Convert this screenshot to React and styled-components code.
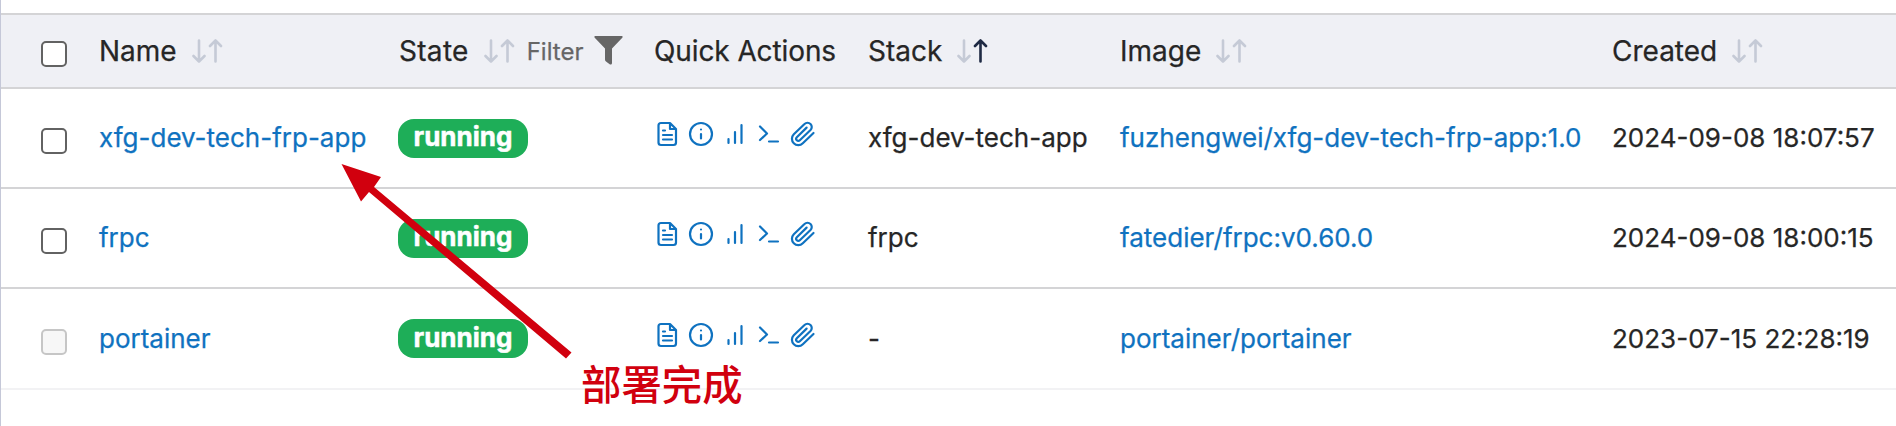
import React from "react";
import styled, { createGlobalStyle } from "styled-components";

const Global = createGlobalStyle`
  * { box-sizing: border-box; }
  body { margin: 0; background: #fff; font-family: Inter, "Noto Sans CJK SC", sans-serif; color: #262626; }
`;

const Page = styled.main`
  position: relative;
  width: 1896px;
  height: 426px;
  padding-top: 13px;
  border-left: 1px solid #c5c8d8;
  overflow: hidden;
`;

const Row = styled.div`
  display: grid;
  grid-template-columns: 98px 299px 256px 214px 252px 492px 1fr;
  height: ${(p) => (p.$last ? 101 : 100)}px;
  padding-top: ${(p) => (p.$last ? 1 : 0)}px;
  border-bottom: 2px solid ${(p) => (p.$last ? "#f2f2f4" : "#d4d4d6")};
`;

const HeaderRow = styled(Row)`
  height: 76px;
  background: #eff0f5;
  border-top: 2px solid #d4d4d6;
`;

const Cell = styled.div`
  display: flex;
  align-items: flex-start;
  white-space: nowrap;
  padding-top: 32px;
  font-size: 26px;
  line-height: 34px;
  -webkit-text-stroke: 0.25px currentColor;
`;

const HeadCell = styled(Cell)`
  padding-top: 19px;
  padding-left: ${(p) => p.$indent || 0}px;
  font-size: 28px;
  letter-spacing: ${(p) => p.$tracking || "normal"};
`;

const CheckCell = styled.div`
  padding: ${(p) => (p.$head ? 26 : 39)}px 0 0 40px;
`;

const Checkbox = styled.input`
  appearance: none;
  display: block;
  margin: 0;
  width: 26px;
  height: 26px;
  border: 2px solid #626262;
  border-radius: 5px;
  background: #fff;
  &:disabled { border-color: #c6c6c6; background: #f7f7f7; }
`;

const Link = styled.a`
  color: #0f72c0;
`;

const Badge = styled.span`
  display: block;
  margin-top: ${(p) => (p.$last ? -3 : -2)}px;
  padding-top: ${(p) => (p.$last ? 1 : 0)}px;
  width: 130px;
  height: 39px;
  line-height: 36px;
  border-radius: 16px;
  background: #1eae58;
  color: #fff;
  font-weight: 700;
  text-align: center;
  -webkit-text-stroke: 0.5px currentColor;
`;

const SortIcon = styled.svg`
  flex: none;
  width: 32px;
  height: 24px;
  margin: 5px 0 0 15px;
  fill: none;
  stroke: #c5cad6;
  stroke-width: 2.6;
  stroke-linecap: round;
  stroke-linejoin: round;
`;

const FilterLabel = styled.span`
  margin-left: 11px;
  font-size: 24px;
  color: #666;
  line-height: 36px;
  letter-spacing: 0;
`;

const Funnel = styled.svg`
  width: 29px;
  height: 29px;
  margin: 2px 0 0 10px;
  fill: #666;
`;

const Actions = styled.div`
  display: flex;
  padding-top: 30px;
`;

const ActionIcons = styled.svg`
  width: 166px;
  height: 32px;
  fill: none;
  stroke: #0f72c0;
  stroke-width: 2.2;
  stroke-linecap: round;
  stroke-linejoin: round;
`;

const Annotation = styled.svg`
  position: absolute;
  left: -1px;
  top: 0;
  pointer-events: none;
`;

const Note = styled.div`
  position: absolute;
  left: 580px;
  top: 355px;
  font: 500 40.4px/56px "Noto Sans CJK SC", sans-serif;
  color: #d1000e;
`;

const Sort = ({ up }) => (
  <SortIcon viewBox="0 0 32 24">
    <path d="M7 1.500v21M1.500 17l5.500 5.500 5.500-5.500" />
    <path d="M23.500 22.500v-21M18 7l5.500-5.500 5.500 5.500" stroke={up ? "#1f2a44" : undefined} />
  </SortIcon>
);

const QuickActions = () => (
  <Actions>
    <ActionIcons viewBox="654 119 166 32">
      <path d="M670 123h-9a2.500 2.500 0 0 0-2.500 2.500v17a2.500 2.500 0 0 0 2.500 2.500h12.500a2.500 2.500 0 0 0 2.500-2.500v-13.500zM670 123v6h6M663 130.500h2M663 135h9M663 139.500h9" />
      <circle cx="701" cy="134" r="11" />
      <path d="M701 129.500v.01M701 134v4.500" />
      <path d="M728.500 139v4M735 132v11M741.500 125v18" />
      <path d="M760 126.500l7 7-7 6.500M769 141.500h9" />
      <path d="M813.500 133l-10.700 10.200a6.300 6.300 0 0 1-9-9L804.500 124a4.200 4.200 0 0 1 6 6l-10.700 10.200a2.100 2.100 0 0 1-3-3l9.800-9.600" />
    </ActionIcons>
  </Actions>
);

const containers = [
  { name: "xfg-dev-tech-frp-app", stack: "xfg-dev-tech-app", image: "fuzhengwei/xfg-dev-tech-frp-app:1.0", created: "2024-09-08 18:07:57" },
  { name: "frpc", stack: "frpc", image: "fatedier/frpc:v0.60.0", created: "2024-09-08 18:00:15" },
  { name: "portainer", stack: "-", image: "portainer/portainer", created: "2023-07-15 22:28:19", locked: true },
];

export default function App() {
  return (
    <Page>
      <Global />
      <HeaderRow>
        <CheckCell $head><Checkbox type="checkbox" /></CheckCell>
        <HeadCell>Name<Sort /></HeadCell>
        <HeadCell $indent={1} $tracking="0.3px">State<Sort /><FilterLabel>Filter</FilterLabel>
          <Funnel viewBox="0 0 29 29"><path d="M1 0h27q1 0 .5 1.500L18 12.500v14.500q0 2-2 1.500l-4-3q-1-.5-1-2V12.500L.5 1.500Q0 0 1 0z" /></Funnel>
        </HeadCell>
        <HeadCell $tracking="-0.1px">Quick Actions</HeadCell>
        <HeadCell>Stack<Sort up /></HeadCell>
        <HeadCell>Image<Sort /></HeadCell>
        <HeadCell>Created<Sort /></HeadCell>
      </HeaderRow>
      {containers.map((c) => (
        <Row key={c.name} $last={c.locked}>
          <CheckCell><Checkbox type="checkbox" disabled={c.locked} /></CheckCell>
          <Cell><Link>{c.name}</Link></Cell>
          <Cell><Badge $last={c.locked}>running</Badge></Cell>
          <QuickActions />
          <Cell>{c.stack}</Cell>
          <Cell><Link>{c.image}</Link></Cell>
          <Cell>{c.created}</Cell>
        </Row>
      ))}
      <Annotation width="640" height="426">
        <path d="M341.500 164L381 177L374 187L571.500 352.500L566 358.500L369 192L361 201.500Z" fill="#d1000e" />
      </Annotation>
      <Note>部署完成</Note>
    </Page>
  );
}
